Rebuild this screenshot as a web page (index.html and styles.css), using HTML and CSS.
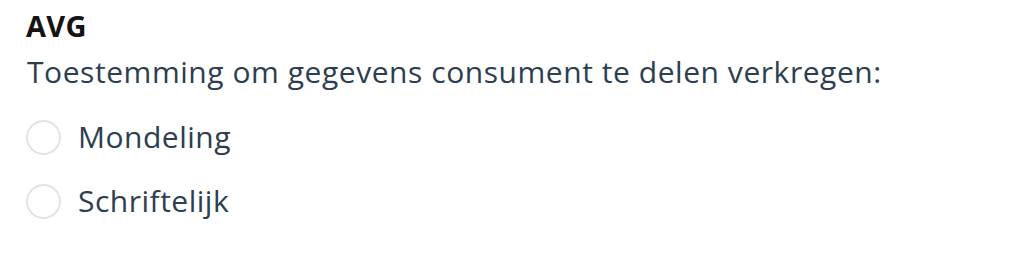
FILE: index.html
```html
<!DOCTYPE html>
<html lang="nl">
<head>
<meta charset="utf-8">
<link rel="stylesheet" href="styles.css">
</head>
<body>
<section class="consent">
  <h2 class="consent-title">AVG</h2>
  <p class="consent-question">Toestemming om gegevens consument te delen verkregen:</p>
  <div class="options">
    <label class="option"><span class="radio"></span><span class="option-label">Mondeling</span></label>
    <label class="option"><span class="radio"></span><span class="option-label">Schriftelijk</span></label>
  </div>
</section>
</body>
</html>
```
FILE: styles.css
```css
html, body {
  margin: 0;
  padding: 0;
  background: #ffffff;
}
body {
  font-family: "Open Sans", "Noto Sans", sans-serif;
  color: #2c3e50;
}
.consent {
  padding: 8px 0 0 26px;
}
.consent-title {
  margin: 0;
  font-size: 29px;
  font-weight: 700;
  color: #141414;
  line-height: 36px;
  letter-spacing: 0.3px;
}
.consent-question {
  margin: 8px 0 0 1px;
  font-size: 30px;
  line-height: 40px;
  letter-spacing: 0.55px;
  white-space: nowrap;
}
.options {
  display: flex;
  flex-direction: column;
  gap: 24px;
  margin-top: 25px;
}
.option {
  display: flex;
  align-items: center;
  gap: 17px;
  height: 40px;
}
.radio {
  width: 31px;
  height: 31px;
  border: 2px solid #dfe2e7;
  border-radius: 50%;
  flex: none;
}
.option-label {
  font-size: 30px;
  line-height: 40px;
  letter-spacing: 0.5px;
}
```
